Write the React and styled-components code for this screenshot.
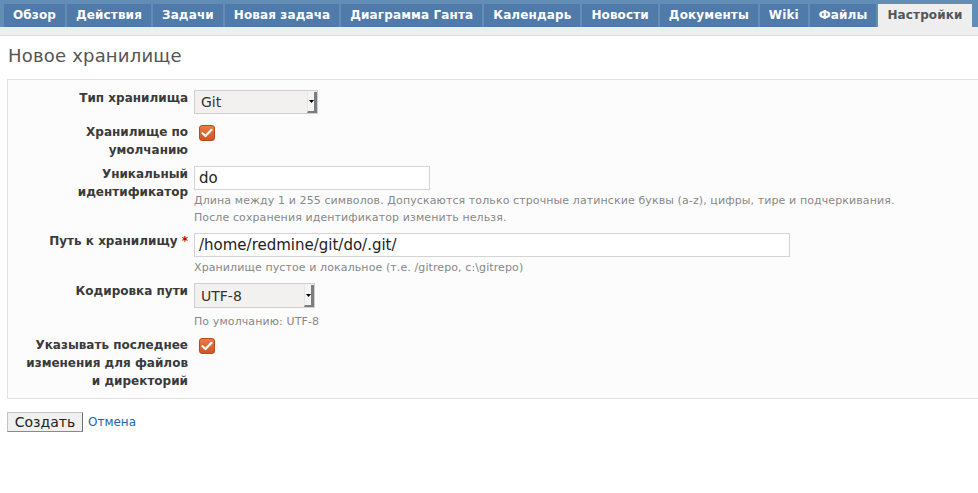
import React from "react";
import styled, { createGlobalStyle } from "styled-components";

const GlobalStyle = createGlobalStyle`
  html, body { margin: 0; padding: 0; background: #fff; overflow: hidden; }
  body { font-family: "DejaVu Sans", Verdana, sans-serif; font-size: 12px; color: #333; }
`;

const Page = styled.div`
  width: 978px;
  min-height: 493px;
  background: #fff;
`;

const MenuBar = styled.nav`
  background: #628db6;
  padding: 4px 0 0 4px;
  display: flex;
  gap: 2px;
`;

const Tab = styled.a`
  display: block;
  height: 23px;
  line-height: 23px;
  padding: 0 9px;
  font-weight: bold;
  font-size: 12px;
  letter-spacing: 0.12px;
  white-space: nowrap;
  text-decoration: none;
  color: ${(p) => (p.$selected ? "#555" : "#fff")};
  background: ${(p) => (p.$selected ? "#eeeeee" : "#507aaa")};
`;

const Main = styled.div`
  background: #eeeeee;
  padding-top: 8px;
`;

const Content = styled.div`
  background: #fff;
  border-top: 1px solid #dcdcdc;
  padding: 8px 0 60px 7px;
`;

const Title = styled.h2`
  margin: 0 0 11px 1px;
  font-size: 18px;
  letter-spacing: 0.2px;
  line-height: 24px;
  font-weight: normal;
  color: #555;
`;

const Box = styled.div`
  width: 1100px;
  background: #fcfcfc;
  border: 1px solid #e2e2e2;
  padding: 9px 0 8px 0;
  display: flex;
  flex-direction: column;
  gap: 6px;
`;

const Row = styled.div`
  display: grid;
  grid-template-columns: 174px 1fr;
  column-gap: 6px;
  padding-left: 6px;
  align-items: start;
`;

const Label = styled.label`
  text-align: right;
  font-weight: bold;
  font-size: 12px;
  line-height: 18px;
  color: #3a3a3a;
`;

const Required = styled.span`
  color: #bb0000;
`;

const Field = styled.div`
  display: flex;
  flex-direction: column;
  align-items: flex-start;
`;

const SelectBox = styled.div`
  margin-top: 1px;
  margin-bottom: 3px;
  width: ${(p) => p.$width}px;
  height: ${(p) => p.$height}px;
  box-sizing: border-box;
  border: 1px solid #cfcfcf;
  background: #f2f1f0;
  display: flex;
  font-size: 14px;
  color: #333;
`;

const SelectValue = styled.span`
  flex: 1;
  padding-left: 6px;
  display: flex;
  align-items: center;
`;

const SelectArrow = styled.span`
  width: 6px;
  margin: 1px 0 0 0;
  border-left: 1px solid #e6e6e6;
  border-right: 3px solid #7d7d7d;
  border-bottom: 2px solid #7d7d7d;
  background: #f4f4f4;
  display: flex;
  align-items: center;
  justify-content: center;
`;

const Check = styled.span`
  margin-top: 2px;
  margin-left: 5px;
  width: 16px;
  height: 16px;
  box-sizing: border-box;
  border-radius: 3px;
  border: 1px solid #b54a1c;
  background: linear-gradient(#ea7c45, #cf5523);
  display: flex;
  align-items: center;
  justify-content: center;
`;

const TextInput = styled.div`
  margin-top: 1px;
  width: ${(p) => p.$width}px;
  height: 24px;
  box-sizing: border-box;
  border: 1px solid #d4d4d4;
  background: #fff;
  padding-left: 4px;
  font-size: 15px;
  line-height: 22px;
  color: #222;
  white-space: nowrap;
`;

const Hint = styled.em`
  display: block;
  font-style: normal;
  font-size: 11px;
  letter-spacing: 0.1px;
  line-height: 17px;
  color: #888;
  white-space: nowrap;
  &:first-of-type { margin-top: 2px; }
`;

const Actions = styled.div`
  margin-top: 13px;
  display: flex;
  align-items: center;
  gap: 5px;
`;

const Button = styled.button`
  width: 76px;
  height: 20px;
  padding: 0;
  box-sizing: border-box;
  font-family: "DejaVu Sans", Verdana, sans-serif;
  font-size: 14px;
  color: #222;
  background: #f0f0f0;
  border: 1px solid #c4c4c4;
  border-right-color: #707070;
  border-bottom-color: #8a8a8a;
  line-height: 18px;
`;

const Link = styled.a`
  color: #1a66a8;
  text-decoration: none;
  font-size: 12px;
  line-height: 16px;
`;

const Arrow = () => (
  <svg width="5" height="3" viewBox="0 0 5 3">
    <path d="M0 0 H5 L2.5 3 Z" fill="#000" />
  </svg>
);

const Select = ({ value, width, height }) => (
  <SelectBox $width={width} $height={height}>
    <SelectValue>{value}</SelectValue>
    <SelectArrow>
      <Arrow />
    </SelectArrow>
  </SelectBox>
);

const Checkbox = () => (
  <Check>
    <svg width="12" height="10" viewBox="0 0 12 10">
      <path d="M1.5 5.2 L4.5 8 L10.5 1.8" fill="none" stroke="#fff" strokeWidth="2.2" strokeLinecap="round" strokeLinejoin="round" />
    </svg>
  </Check>
);

const tabs = [
  "Обзор",
  "Действия",
  "Задачи",
  "Новая задача",
  "Диаграмма Ганта",
  "Календарь",
  "Новости",
  "Документы",
  "Wiki",
  "Файлы",
  "Настройки",
];

export default function App() {
  return (
    <Page>
      <GlobalStyle />
      <MenuBar>
        {tabs.map((t) => (
          <Tab key={t} href="#" $selected={t === "Настройки"}>
            {t}
          </Tab>
        ))}
      </MenuBar>
      <Main>
        <Content>
          <Title>Новое хранилище</Title>
          <Box>
            <Row>
              <Label>Тип хранилища</Label>
              <Field>
                <Select value="Git" width={124} height={24} />
              </Field>
            </Row>
            <Row>
              <Label>Хранилище по умолчанию</Label>
              <Field>
                <Checkbox />
              </Field>
            </Row>
            <Row>
              <Label>Уникальный идентификатор</Label>
              <Field>
                <TextInput $width={236}>do</TextInput>
                <Hint>Длина между 1 и 255 символов. Допускаются только строчные латинские буквы (a-z), цифры, тире и подчеркивания.</Hint>
                <Hint>После сохранения идентификатор изменить нельзя.</Hint>
              </Field>
            </Row>
            <Row>
              <Label>
                Путь к хранилищу <Required>*</Required>
              </Label>
              <Field>
                <TextInput $width={596}>/home/redmine/git/do/.git/</TextInput>
                <Hint>Хранилище пустое и локальное (т.е. /gitrepo, c:\gitrepo)</Hint>
              </Field>
            </Row>
            <Row>
              <Label>Кодировка пути</Label>
              <Field>
                <Select value="UTF-8" width={121} height={25} />
                <Hint>По умолчанию: UTF-8</Hint>
              </Field>
            </Row>
            <Row>
              <Label>Указывать последнее изменения для файлов и директорий</Label>
              <Field>
                <Checkbox />
              </Field>
            </Row>
          </Box>
          <Actions>
            <Button>Создать</Button>
            <Link href="#">Отмена</Link>
          </Actions>
        </Content>
      </Main>
    </Page>
  );
}
